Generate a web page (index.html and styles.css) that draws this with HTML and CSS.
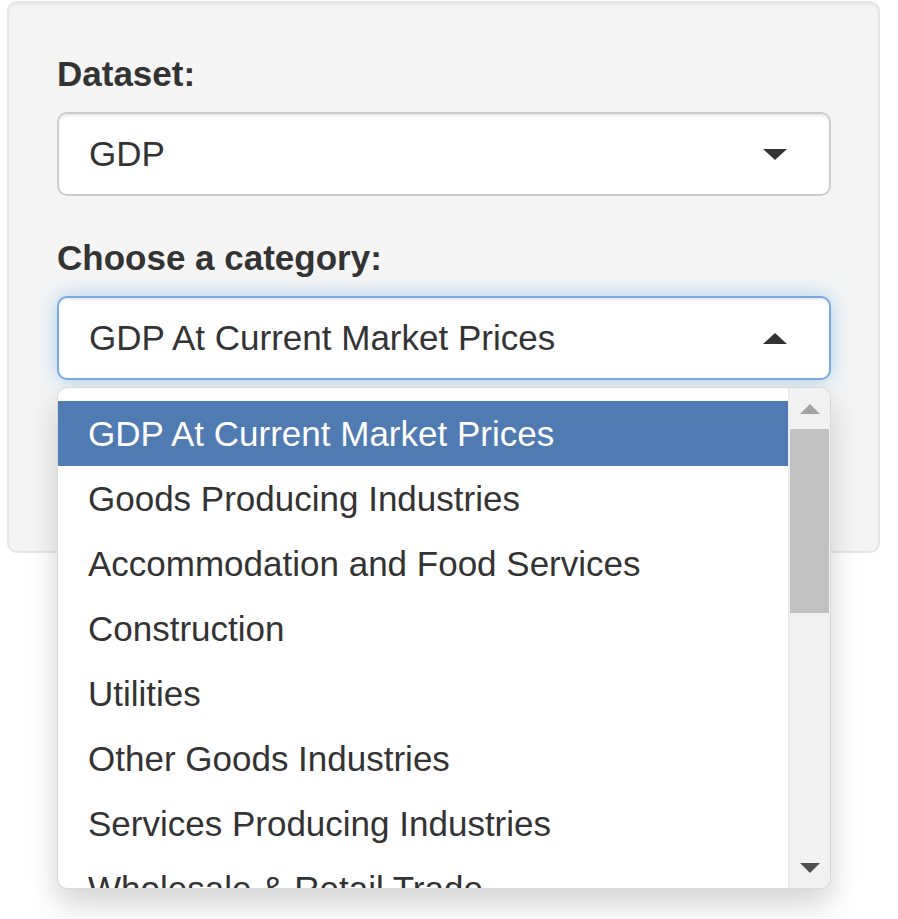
FILE: index.html
```html
<!DOCTYPE html>
<html lang="en">
<head>
<meta charset="utf-8">
<title>Dataset selector</title>
<link rel="stylesheet" href="styles.css">
</head>
<body>
<div class="page">
  <div class="well">
    <div class="form-group">
      <label class="control-label">Dataset:</label>
      <div class="selectize">
        <div class="selectize-input">
          <span class="item">GDP</span>
          <span class="caret down"></span>
        </div>
      </div>
    </div>
    <div class="form-group">
      <label class="control-label">Choose a category:</label>
      <div class="selectize">
        <div class="selectize-input focus">
          <span class="item">GDP At Current Market Prices</span>
          <span class="caret up"></span>
        </div>
        <div class="dropdown">
          <div class="dropdown-content">
            <div class="option active">GDP At Current Market Prices</div>
            <div class="option">Goods Producing Industries</div>
            <div class="option">Accommodation and Food Services</div>
            <div class="option">Construction</div>
            <div class="option">Utilities</div>
            <div class="option">Other Goods Industries</div>
            <div class="option">Services Producing Industries</div>
            <div class="option">Wholesale &amp; Retail Trade</div>
          </div>
          <div class="scrollbar">
            <div class="sb-btn"><span class="sb-arrow sb-up"></span></div>
            <div class="sb-track"><div class="sb-thumb"></div></div>
            <div class="sb-btn"><span class="sb-arrow sb-down"></span></div>
          </div>
        </div>
      </div>
    </div>
  </div>
</div>
</body>
</html>
```

FILE: styles.css
```css
* { box-sizing: border-box; }
html, body {
  margin: 0;
  padding: 0;
  background: #ffffff;
}
body {
  font-family: "Liberation Sans", Arial, Helvetica, sans-serif;
  font-size: 35px;
  line-height: 50px;
  color: #333333;
}
.page {
  min-height: 919px;
  padding: 1px 0 0 7px;
}
.well {
  width: 873px;
  height: 552px;
  background: #f5f5f5;
  border: 2px solid #e6e6e6;
  border-radius: 10px;
  padding: 46px 47px 0 48px;
  box-shadow: inset 0 2px 2px rgba(0,0,0,0.05);
}
.form-group {
  margin-bottom: 37px;
}
.control-label {
  display: block;
  font-weight: bold;
  margin-bottom: 13px;
  line-height: 50px;
}
.selectize {
  position: relative;
}
.selectize-input {
  display: flex;
  align-items: center;
  justify-content: space-between;
  height: 84px;
  padding: 0 42px 0 30px;
  background: #ffffff;
  border: 2px solid #cccccc;
  border-radius: 10px;
  box-shadow: inset 0 2px 2px rgba(0,0,0,0.075);
}
.selectize-input.focus {
  border-color: #7aaae4;
  box-shadow: inset 0 2px 2px rgba(0,0,0,0.075), 0 0 20px rgba(102,175,233,0.55);
}
.item {
  white-space: nowrap;
}
.caret {
  width: 0;
  height: 0;
  border-left: 12px solid transparent;
  border-right: 12px solid transparent;
}
.caret.down {
  border-top: 11px solid #333333;
}
.caret.up {
  border-bottom: 11px solid #333333;
}
.dropdown {
  position: absolute;
  top: calc(100% + 7px);
  left: 0;
  right: 0;
  height: 502px;
  display: flex;
  background: #ffffff;
  border: 1px solid rgba(0,0,0,0.15);
  border-radius: 10px;
  box-shadow: 0 15px 30px rgba(0,0,0,0.175);
  overflow: hidden;
  z-index: 10;
}
.dropdown-content {
  flex: 1;
  padding-top: 13px;
  overflow: hidden;
}
.option {
  height: 65px;
  padding: 0 30px;
  line-height: 65px;
  white-space: nowrap;
  color: #333333;
}
.option.active {
  background: #507ab2;
  color: #ffffff;
}
.scrollbar {
  width: 42px;
  display: flex;
  flex-direction: column;
  background: #f1f1f1;
  border-left: 1px solid #e8e8e8;
}
.sb-btn {
  height: 41px;
  display: flex;
  align-items: center;
  justify-content: center;
}
.sb-arrow {
  width: 0;
  height: 0;
  border-left: 10px solid transparent;
  border-right: 10px solid transparent;
}
.sb-up {
  border-bottom: 10px solid #a3a3a3;
}
.sb-down {
  border-top: 10px solid #505050;
}
.sb-track {
  flex: 1;
  padding: 0 1px 0 1px;
}
.sb-thumb {
  height: 184px;
  background: #c1c1c1;
}
```
